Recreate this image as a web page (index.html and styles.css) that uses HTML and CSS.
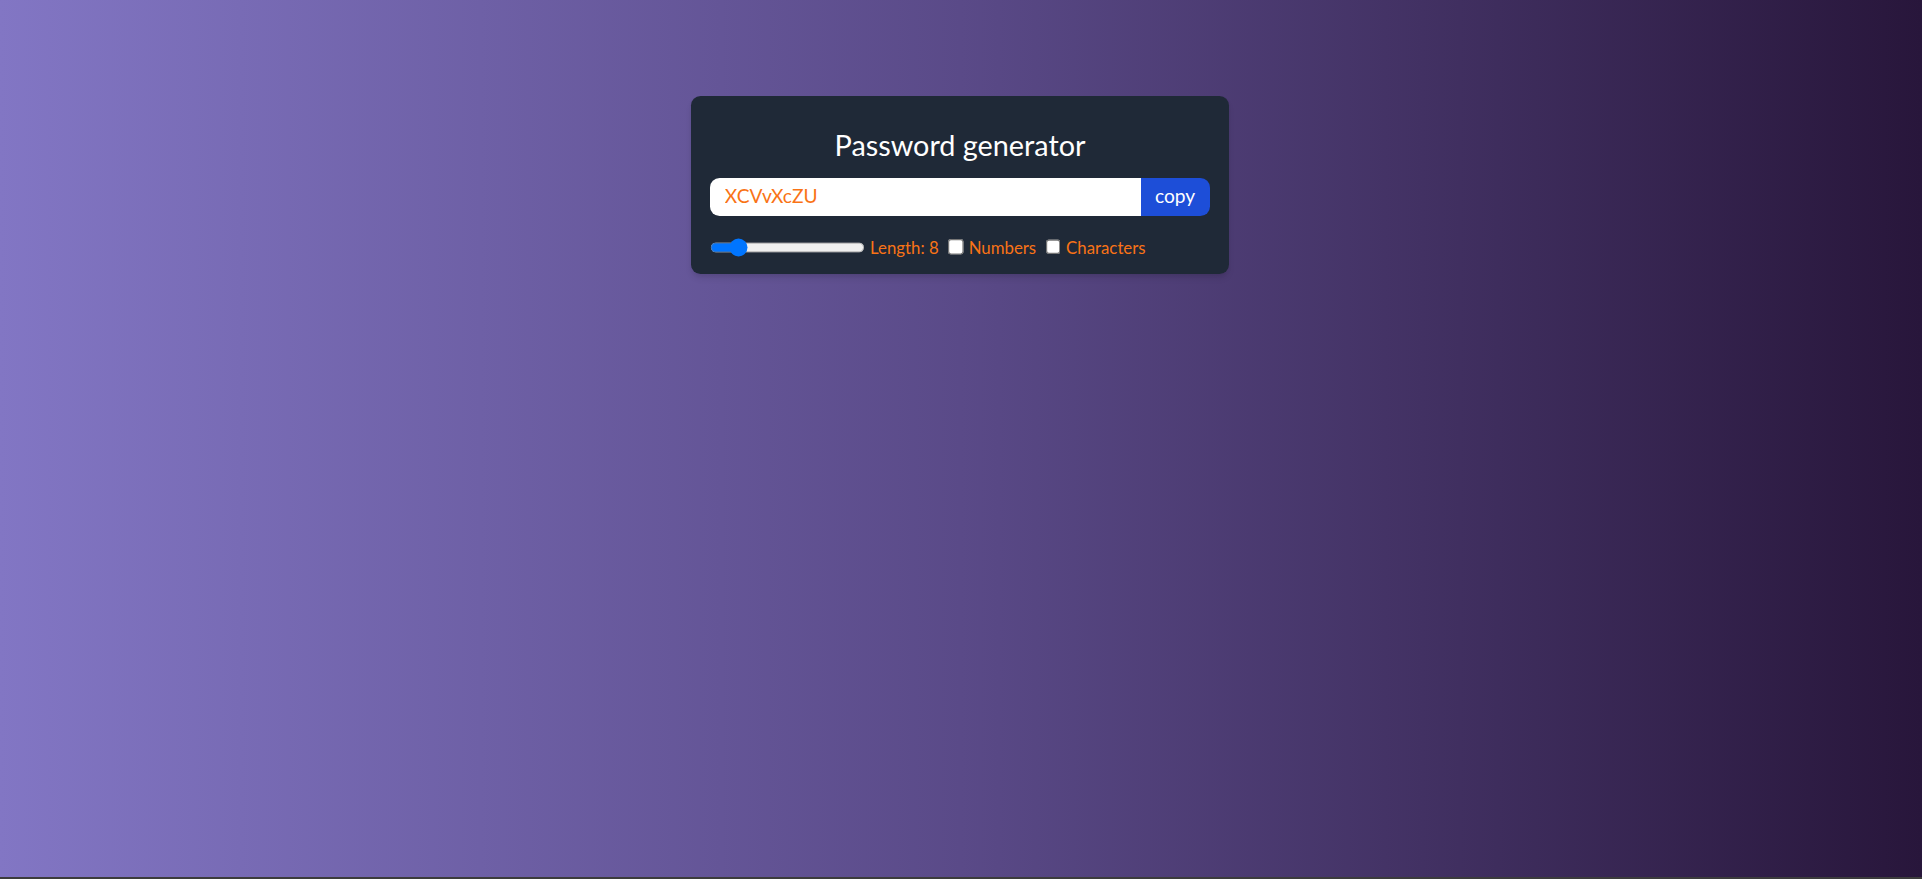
FILE: index.html
```html
<!DOCTYPE html>
<html lang="en">
<head>
<meta charset="utf-8">
<title>Password generator</title>
<link rel="stylesheet" href="styles.css">
</head>
<body>
<main class="page">
  <div class="card">
    <h1 class="title">Password generator</h1>
    <div class="field">
      <input class="password" type="text" value="XCVvXcZU" placeholder="Password" readonly>
      <button class="copy" type="button">copy</button>
    </div>
    <div class="options">
      <div class="option">
        <input class="range" type="range" min="0" max="60" value="8">
        <label>Length: 8</label>
      </div>
      <div class="option">
        <input type="checkbox" id="numbers">
        <label for="numbers">Numbers</label>
      </div>
      <div class="option">
        <input type="checkbox" id="chars">
        <label for="chars">Characters</label>
      </div>
    </div>
  </div>
</main>
</body>
</html>
```
FILE: styles.css
```css
html {
  background-color: #3c3c3c;
  background-image: linear-gradient(to right, #8276c4 0%, #5a4a88 50%, #28163b 100%);
  background-repeat: no-repeat;
  background-size: 100% 877px;
  min-height: 100%;
}

body {
  margin: 0;
  zoom: 1.2;
  font-family: Lato, "Open Sans", sans-serif;
  line-height: 1.5;
}

.page {
  padding-top: 48px;
  padding-right: 1.6px;
}

.card {
  width: 448px;
  box-sizing: border-box;
  margin: 32px auto;
  padding: 12px 16px;
  background: #1f2937;
  color: #f97316;
  border-radius: 8px;
  box-shadow: 0 4px 6px -1px rgba(0,0,0,0.1), 0 2px 4px -2px rgba(0,0,0,0.1);
}

.title {
  margin: 12px 0 11px;
  padding-top: 1px;
  color: #ffffff;
  text-align: center;
  font-size: 24px;
  line-height: 32px;
  font-weight: 400;
}

.field {
  display: flex;
  border-radius: 8px;
  overflow: hidden;
  margin-bottom: 16px;
}

.password {
  flex: 1;
  min-width: 0;
  margin: 0;
  border: 0;
  outline: none;
  padding: 4px 12px;
  font: inherit;
  font-size: 16px;
  line-height: 24px;
  color: #f97316;
  background: #ffffff;
}

.copy {
  flex-shrink: 0;
  margin: 0;
  border: 0;
  padding: 2px 12px;
  font: inherit;
  font-size: 16px;
  line-height: 24px;
  background: #1d4ed8;
  color: #ffffff;
}

.options {
  display: flex;
  column-gap: 8px;
  font-size: 14px;
  line-height: 20px;
}

.option {
  display: flex;
  align-items: center;
  column-gap: 4px;
}

.option label {
  padding-top: 1px;
  margin-bottom: -1px;
}

.option input {
  margin: 0;
}

.range {
  cursor: pointer;
}
```
